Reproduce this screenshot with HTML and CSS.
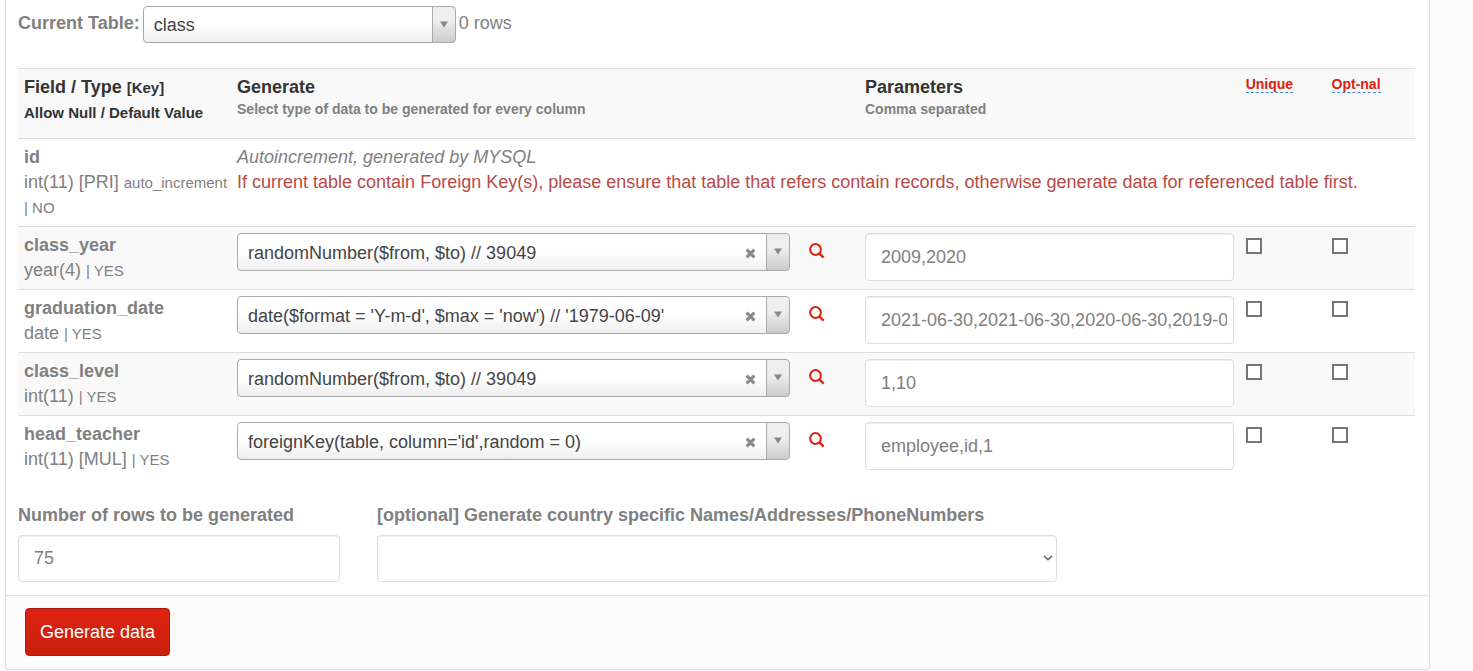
FILE: index.html
```html
<!DOCTYPE html>
<html lang="en">
<head>
<meta charset="utf-8">
<meta name="viewport" content="width=device-width, initial-scale=1">
<title>Generate data</title>
<link rel="stylesheet" href="styles.css">
</head>
<body>
<svg class="sprite" aria-hidden="true">
  <symbol id="i-arrow" viewBox="0 0 8 7"><path d="M0 0.5h8L4 6.5z" fill="#888"/></symbol>
  <symbol id="i-clear" viewBox="0 0 10 10"><path d="M1.5 1.5l7 7M8.5 1.5l-7 7" stroke="#888" stroke-width="2.8"/></symbol>
  <symbol id="i-search" viewBox="0 0 16 16"><circle cx="6.5" cy="6.5" r="5.4" fill="none" stroke="#d9230f" stroke-width="2"/><path d="M10 10l4.6 4.6" stroke="#d9230f" stroke-width="2.4"/></symbol>
  <symbol id="i-chevron" viewBox="0 0 10 6"><path d="M1 1l4 3.6L9 1" fill="none" stroke="#666" stroke-width="1.6"/></symbol>
</svg>
<form class="panel">
  <div class="panel-body">
    <div class="current">
      <label for="table">Current Table:</label>
      <span class="picker">
        <select id="table"><option>class</option></select>
        <svg class="arrow"><use href="#i-arrow"/></svg>
      </span>
      <span>0 rows</span>
    </div>

    <table class="fields">
      <colgroup><col class="c-field"><col class="c-generate"><col class="c-params"><col class="c-check"><col></colgroup>
      <tbody>
        <tr class="head">
          <th scope="col">Field / Type <small>[Key]</small><br><small>Allow Null / Default Value</small></th>
          <th scope="col">Generate<span class="hint">Select type of data to be generated for every column</span></th>
          <th scope="col">Parameters<span class="hint">Comma separated</span></th>
          <th scope="col" class="tip"><a href="#unique">Unique</a></th>
          <th scope="col" class="tip"><a href="#optional">Opt-nal</a></th>
        </tr>
        <tr>
          <td><b>id</b><br>int(11) [PRI] <small>auto_increment | NO</small></td>
          <td colspan="4"><em>Autoincrement, generated by MYSQL</em><br><span class="warning">If current table contain Foreign Key(s), please ensure that table that refers contain records, otherwise generate data for referenced table first.</span></td>
        </tr>
        <tr>
          <td><b>class_year</b><br>year(4) <small>| YES</small></td>
          <td><div class="generate">
            <span class="picker"><select aria-label="Generator for class_year"><option>randomNumber($from, $to) // 39049</option></select><button type="button" class="clear" aria-label="Clear"><svg><use href="#i-clear"/></svg></button><svg class="arrow"><use href="#i-arrow"/></svg></span>
            <a href="#search" class="search" aria-label="Search"><svg><use href="#i-search"/></svg></a>
          </div></td>
          <td><input class="control" type="text" aria-label="Parameters for class_year" value="2009,2020"></td>
          <td><input type="checkbox" aria-label="Unique class_year"></td>
          <td><input type="checkbox" aria-label="Optional class_year"></td>
        </tr>
        <tr>
          <td><b>graduation_date</b><br>date <small>| YES</small></td>
          <td><div class="generate">
            <span class="picker"><select aria-label="Generator for graduation_date"><option>date($format = 'Y-m-d', $max = 'now') // '1979-06-09'</option></select><button type="button" class="clear" aria-label="Clear"><svg><use href="#i-clear"/></svg></button><svg class="arrow"><use href="#i-arrow"/></svg></span>
            <a href="#search" class="search" aria-label="Search"><svg><use href="#i-search"/></svg></a>
          </div></td>
          <td><input class="control" type="text" aria-label="Parameters for graduation_date" value="2021-06-30,2021-06-30,2020-06-30,2019-06-30"></td>
          <td><input type="checkbox" aria-label="Unique graduation_date"></td>
          <td><input type="checkbox" aria-label="Optional graduation_date"></td>
        </tr>
        <tr>
          <td><b>class_level</b><br>int(11) <small>| YES</small></td>
          <td><div class="generate">
            <span class="picker"><select aria-label="Generator for class_level"><option>randomNumber($from, $to) // 39049</option></select><button type="button" class="clear" aria-label="Clear"><svg><use href="#i-clear"/></svg></button><svg class="arrow"><use href="#i-arrow"/></svg></span>
            <a href="#search" class="search" aria-label="Search"><svg><use href="#i-search"/></svg></a>
          </div></td>
          <td><input class="control" type="text" aria-label="Parameters for class_level" value="1,10"></td>
          <td><input type="checkbox" aria-label="Unique class_level"></td>
          <td><input type="checkbox" aria-label="Optional class_level"></td>
        </tr>
        <tr>
          <td><b>head_teacher</b><br>int(11) [MUL] <small>| YES</small></td>
          <td><div class="generate">
            <span class="picker"><select aria-label="Generator for head_teacher"><option>foreignKey(table, column='id',random = 0)</option></select><button type="button" class="clear" aria-label="Clear"><svg><use href="#i-clear"/></svg></button><svg class="arrow"><use href="#i-arrow"/></svg></span>
            <a href="#search" class="search" aria-label="Search"><svg><use href="#i-search"/></svg></a>
          </div></td>
          <td><input class="control" type="text" aria-label="Parameters for head_teacher" value="employee,id,1"></td>
          <td><input type="checkbox" aria-label="Unique head_teacher"></td>
          <td><input type="checkbox" aria-label="Optional head_teacher"></td>
        </tr>
      </tbody>
    </table>

    <div class="options">
      <div class="group">
        <label for="rows">Number of rows to be generated</label>
        <input class="control" id="rows" type="text" value="75">
      </div>
      <div class="group">
        <label for="country">[optional] Generate country specific Names/Addresses/PhoneNumbers</label>
        <span class="dropdown">
          <select class="control" id="country"><option></option></select>
          <svg class="chevron"><use href="#i-chevron"/></svg>
        </span>
      </div>
    </div>
  </div>
  <div class="panel-footer"><button type="submit" class="submit">Generate data</button></div>
</form>
</body>
</html>
```

FILE: styles.css
```css
* { box-sizing: border-box; }
body {
  margin: 0;
  padding: 0 43px 0 5px;
  background: #fcfcfc;
  color: #808080;
  font: 18px/25px "Liberation Sans", Arial, sans-serif;
}
.sprite { display: none; }
svg { display: block; }
input, select, button { font: inherit; margin: 0; }
label, b { font-weight: 700; }
small { font-size: 15px; }

.panel {
  background: #fff;
  border: 1px solid #ddd;
  border-top: 0;
  border-radius: 0 0 4px 4px;
  box-shadow: 0 1px 1px rgba(0, 0, 0, .05);
}
.panel-body { padding: 6px 14px 13px 12px; }
.current {
  display: flex;
  align-items: center;
  gap: 3px;
  height: 37px;
  margin-bottom: 25px;
}
.current label, .current > span:last-child { padding-bottom: 2px; }
.current .picker { width: 313px; }

.picker { position: relative; display: block; }
.picker select {
  appearance: none;
  display: block;
  width: 100%;
  height: 38px;
  padding: 2px 60px 0 10px;
  border: 1px solid #aaa;
  border-radius: 4px;
  color: #444;
  background:
    linear-gradient(#aaa, #aaa) right 22px top / 1px 100% no-repeat,
    linear-gradient(to top, #ccc, #eee 60%) right top / 22px 100% no-repeat,
    linear-gradient(to top, #eee, #fff 50%);
}
.current .picker select { height: 37px; }
.arrow { position: absolute; right: 8px; top: 15px; width: 8px; height: 7px; pointer-events: none; }
.clear {
  position: absolute;
  right: 34px;
  top: 15px;
  padding: 0;
  border: 0;
  background: none;
}
.clear svg { width: 11px; height: 11px; }

.fields { width: 100%; table-layout: fixed; border-collapse: separate; border-spacing: 0; }
.c-field { width: 15.25%; }
.c-generate { width: 44.95%; }
.c-params { width: 27.25%; }
.c-check { width: 6.15%; }
.fields th, .fields td {
  padding: 6px;
  border-top: 1px solid #ddd;
  vertical-align: top;
  text-align: left;
}
.fields th:first-child, .fields td:first-child { padding-right: 0; }
.fields tr:nth-child(odd) { background: #f9f9f9; }
.head th { height: 70px; color: #333; }
.hint { display: block; font-size: 14px; line-height: 18px; color: #808080; }
.fields .tip { font-size: 14px; line-height: 19px; }
.tip a { color: #d9230f; text-decoration: none; border-bottom: 1px dashed #428bca; }
.warning { color: #b94a48; }
.generate { display: flex; }
.generate .picker { flex: 1; min-width: 0; }
.search { width: 63px; padding: 10px 0 0 19px; }
.search svg { width: 16px; height: 16px; }

.control {
  display: block;
  width: 100%;
  height: 48px;
  padding: 0 6px 0 15px;
  border: 1px solid #ddd;
  border-radius: 4px;
  background: #fff;
  color: #808080;
  box-shadow: inset 0 1px 1px rgba(0, 0, 0, .075);
}
input[type="checkbox"] {
  appearance: none;
  display: block;
  width: 16px;
  height: 16px;
  margin-top: 5px;
  border: 2px solid #767676;
  background: #fff;
}
input[type="checkbox"]:checked { background: #d9230f; }

.options {
  display: grid;
  grid-template-columns: 322fr 680fr 321fr;
  gap: 37px;
  padding-top: 25px;
}
.group label { display: block; margin-bottom: 7px; }
.group .control { height: 47px; }
.dropdown { display: block; position: relative; }
.dropdown select { appearance: none; }
.chevron { position: absolute; right: 4px; top: 20px; width: 10px; height: 6px; pointer-events: none; }

.panel-footer {
  padding: 12px 19px 13px;
  border-top: 1px solid #ddd;
  border-radius: 0 0 4px 4px;
  background: #fcfcfc;
}
.submit {
  display: block;
  height: 48px;
  padding: 0 14px;
  border: 1px solid #a91b0c;
  border-radius: 4px;
  color: #fff;
  background: linear-gradient(#dd2410, #c9200e);
}
```
